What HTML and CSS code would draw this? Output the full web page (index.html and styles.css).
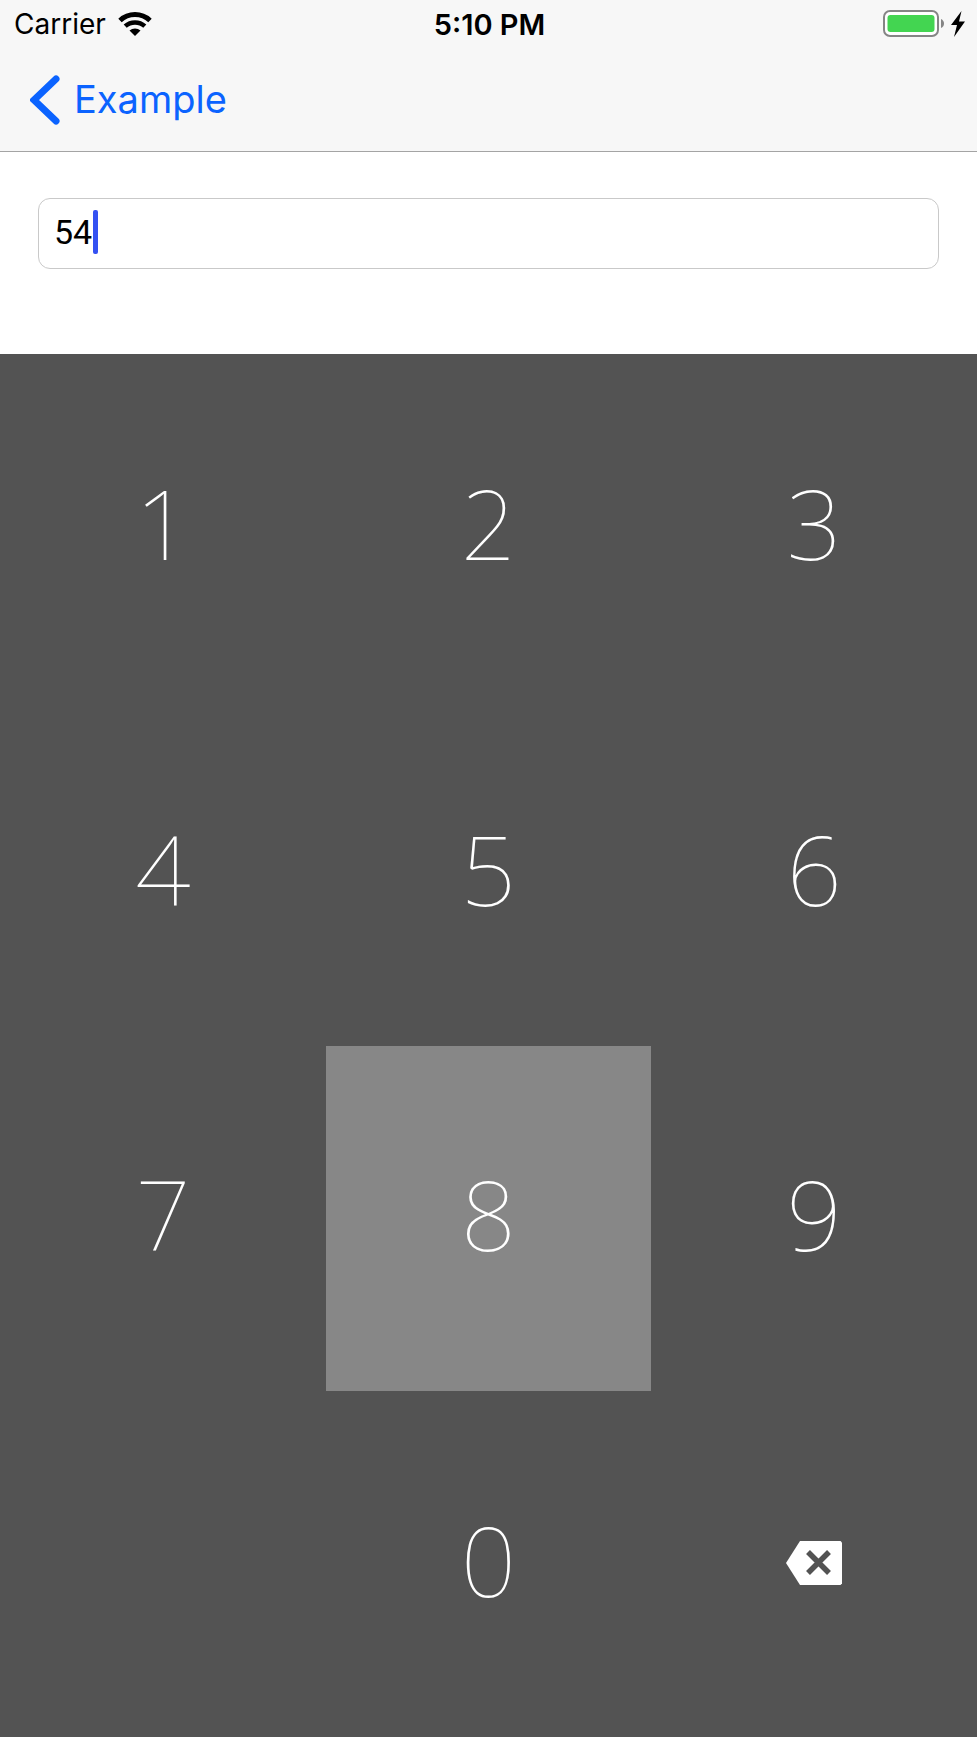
FILE: index.html
```html
<!DOCTYPE html>
<html lang="en">
<head>
<meta charset="utf-8">
<meta name="viewport" content="width=device-width, initial-scale=1">
<title>Example</title>
<link rel="stylesheet" href="styles.css">
</head>
<body>
<div class="screen">
  <header class="header">
    <div class="status">
      <div class="status-left">
        <span>Carrier</span>
        <svg class="wifi" viewBox="0 0 34 24" aria-hidden="true">
          <path d="M2 8.500a22 22 0 0 1 30 0" fill="none" stroke="#000" stroke-width="5"/>
          <path d="M7.200 14.200a14.500 14.500 0 0 1 19.600 0" fill="none" stroke="#000" stroke-width="4.500"/>
          <path d="M11.500 18.500a8.500 8.500 0 0 1 11 0L17 24z"/>
        </svg>
      </div>
      <time class="clock">5:10 PM</time>
      <div class="status-right">
        <svg class="battery" viewBox="0 0 62 28" aria-hidden="true">
          <rect x="1" y="1" width="54" height="25" rx="6" fill="#fff" stroke="#858585" stroke-width="2"/>
          <rect x="4.500" y="5" width="47" height="17" rx="3" fill="#43d551"/>
          <path d="M58 9v9q3-1.500 3-4.500t-3-4.500z" fill="#858585"/>
        </svg>
        <svg class="bolt" viewBox="0 0 14 26" aria-hidden="true"><path d="M10.500 0 0 14h6L3 26 14 10.500H8z"/></svg>
      </div>
    </div>
    <nav class="nav">
      <a class="back" href="#">
        <svg class="chevron" viewBox="0 0 30 50" aria-hidden="true"><path d="M26 4 4 25l22 21" fill="none" stroke="#0b63ff" stroke-width="7" stroke-linecap="round"/></svg>
        <span class="back-label">Example</span>
      </a>
    </nav>
  </header>
  <section class="entry">
    <div class="field">
      <input class="input" type="text" inputmode="numeric" value="54" aria-label="Number">
      <span class="caret"></span>
    </div>
  </section>
  <main class="keypad">
    <button class="key">1</button>
    <button class="key">2</button>
    <button class="key">3</button>
    <button class="key">4</button>
    <button class="key">5</button>
    <button class="key">6</button>
    <button class="key">7</button>
    <button class="key key-pressed">8</button>
    <button class="key">9</button>
    <button class="key key-zero">0</button>
    <button class="key key-delete" aria-label="Delete">
      <svg class="delete" viewBox="0 0 56 44" aria-hidden="true">
        <path d="M14 0H54.500L56 1.500V42.500L54.500 44H14L0 22z" fill="#fff"/>
        <path d="m22 11 21 21m0-21L22 32" fill="none" stroke="#535353" stroke-width="5.500"/>
      </svg>
    </button>
  </main>
</div>
</body>
</html>
```
FILE: styles.css
```css
* {
  box-sizing: border-box;
}

body {
  margin: 0;
  background: #fff;
  color: #000;
  font-family: Inter, "Liberation Sans", sans-serif;
}

.screen {
  display: flex;
  flex-direction: column;
  min-height: 100vh;
}

.header {
  background: #f7f7f7;
  border-bottom: 1px solid #a4a4a4;
}

.status {
  display: grid;
  grid-template-columns: 1fr auto 1fr;
  align-items: center;
  height: 48px;
  padding: 0 12px 0 14px;
  font-size: 28px;
}

.status-left,
.status-right {
  display: flex;
  align-items: center;
  gap: 12px;
}

.status-right {
  justify-content: flex-end;
  gap: 6px;
}

.clock {
  font-size: 29px;
  font-weight: 600;
}

.wifi {
  width: 34px;
  height: 24px;
}

.battery {
  width: 62px;
  height: 28px;
}

.bolt {
  width: 14px;
  height: 26px;
}

.nav {
  display: flex;
  align-items: center;
  height: 103px;
  padding: 0 30px;
}

.back {
  display: flex;
  align-items: center;
  gap: 14px;
  color: #0b63ff;
  font-size: 38px;
  text-decoration: none;
}

.back-label {
  padding-bottom: 2px;
}

.chevron {
  width: 30px;
  height: 50px;
}

.entry {
  padding: 46px 38px 85px;
}

.field {
  position: relative;
}

.input {
  display: block;
  width: 100%;
  height: 71px;
  padding: 0 15px 4px;
  border: 1px solid #c9c9c9;
  border-radius: 12px;
  background: #fff;
  color: #000;
  font-family: Roboto, sans-serif;
  font-size: 34px;
  outline: none;
}

.caret {
  position: absolute;
  top: 12px;
  left: 55px;
  width: 5px;
  height: 44px;
  border-radius: 2px;
  background: #3451f2;
}

.keypad {
  display: grid;
  flex: 1;
  grid-template-columns: repeat(3, 1fr);
  grid-template-rows: repeat(4, 1fr);
  background: #535353;
}

.key {
  display: flex;
  align-items: center;
  justify-content: center;
  padding: 0 0 10px;
  border: 0;
  background: none;
  color: #fff;
  font-family: "Noto Sans", sans-serif;
  font-size: 97px;
  font-weight: 100;
}

.key-pressed {
  background: #878787;
}

.key-zero {
  grid-column: 2;
}

.key-delete {
  padding-bottom: 2px;
}

.delete {
  width: 56px;
  height: 44px;
}
```
